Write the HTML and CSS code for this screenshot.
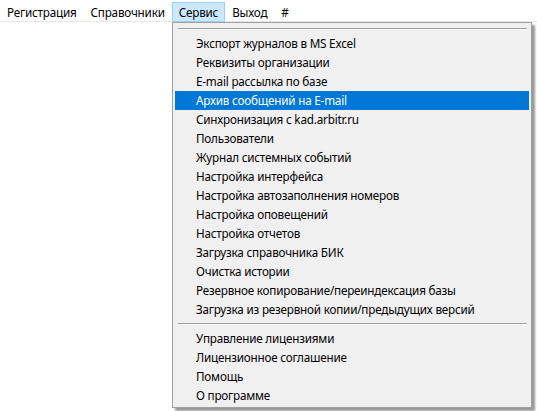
FILE: index.html
```html
<!DOCTYPE html>
<html lang="ru">
<head>
<meta charset="utf-8">
<link rel="stylesheet" href="styles.css">
</head>
<body>
<div class="menubar">
  <div class="mb-item">Регистрация</div>
  <div class="mb-item">Справочники</div>
  <div class="mb-item active">Сервис</div>
  <div class="mb-item">Выход</div>
  <div class="mb-item">#</div>
</div>
<div class="popup">
  <div class="sep top"></div>
  <div class="mi">Экспорт журналов в MS Excel</div>
  <div class="mi">Реквизиты организации</div>
  <div class="mi">E-mail рассылка по базе</div>
  <div class="mi sel">Архив сообщений на E-mail</div>
  <div class="mi">Синхронизация с kad.arbitr.ru</div>
  <div class="mi">Пользователи</div>
  <div class="mi">Журнал системных событий</div>
  <div class="mi">Настройка интерфейса</div>
  <div class="mi">Настройка автозаполнения номеров</div>
  <div class="mi">Настройка оповещений</div>
  <div class="mi">Настройка отчетов</div>
  <div class="mi">Загрузка справочника БИК</div>
  <div class="mi">Очистка истории</div>
  <div class="mi">Резервное копирование/переиндексация базы</div>
  <div class="mi">Загрузка из резервной копии/предыдущих версий</div>
  <div class="sep"></div>
  <div class="mi">Управление лицензиями</div>
  <div class="mi">Лицензионное соглашение</div>
  <div class="mi">Помощь</div>
  <div class="mi">О программе</div>
</div>
</body>
</html>
```
FILE: styles.css
```css
html, body {
  margin: 0;
  padding: 0;
  background: #ffffff;
}
body {
  font-family: "Noto Sans", "Open Sans", sans-serif;
  font-size: 11.7px;
  letter-spacing: -0.2px;
  color: #000;
  width: 537px;
  height: 411px;
  position: relative;
  overflow: hidden;
}
.menubar {
  display: flex;
  padding: 2px 0 0 0;
  box-sizing: border-box;
  border-bottom: 1px solid #e8e8e8;
  background: #fff;
  height: 22px;
}
.mb-item {
  padding: 0 6px;
  height: 20px;
  line-height: 18px;
  box-sizing: border-box;
  border: 1px solid transparent;
}
.mb-item.active {
  background: #cce8ff;
  border-color: #99d1ff;
}
.popup {
  position: absolute;
  left: 172px;
  top: 22px;
  width: 360px;
  box-sizing: border-box;
  background: #f0f0f0;
  border: 1px solid #a0a0a0;
  box-shadow: 3px 3px 2px rgba(0, 0, 0, 0.4);
  padding: 2px;
}
.sep {
  height: 10px;
  position: relative;
}
.sep::after {
  content: "";
  position: absolute;
  left: 3px;
  right: 2px;
  top: 4px;
  height: 1px;
  background: #a0a0a0;
  border-bottom: 1px solid #ffffff;
}
.sep.top {
  height: 9px;
}
.sep.top::after {
  top: 3px;
}
.mi {
  height: 19px;
  line-height: 19px;
  padding-left: 21px;
  white-space: nowrap;
}
.mi.sel {
  background: #0078d7;
  color: #ffffff;
}
```
